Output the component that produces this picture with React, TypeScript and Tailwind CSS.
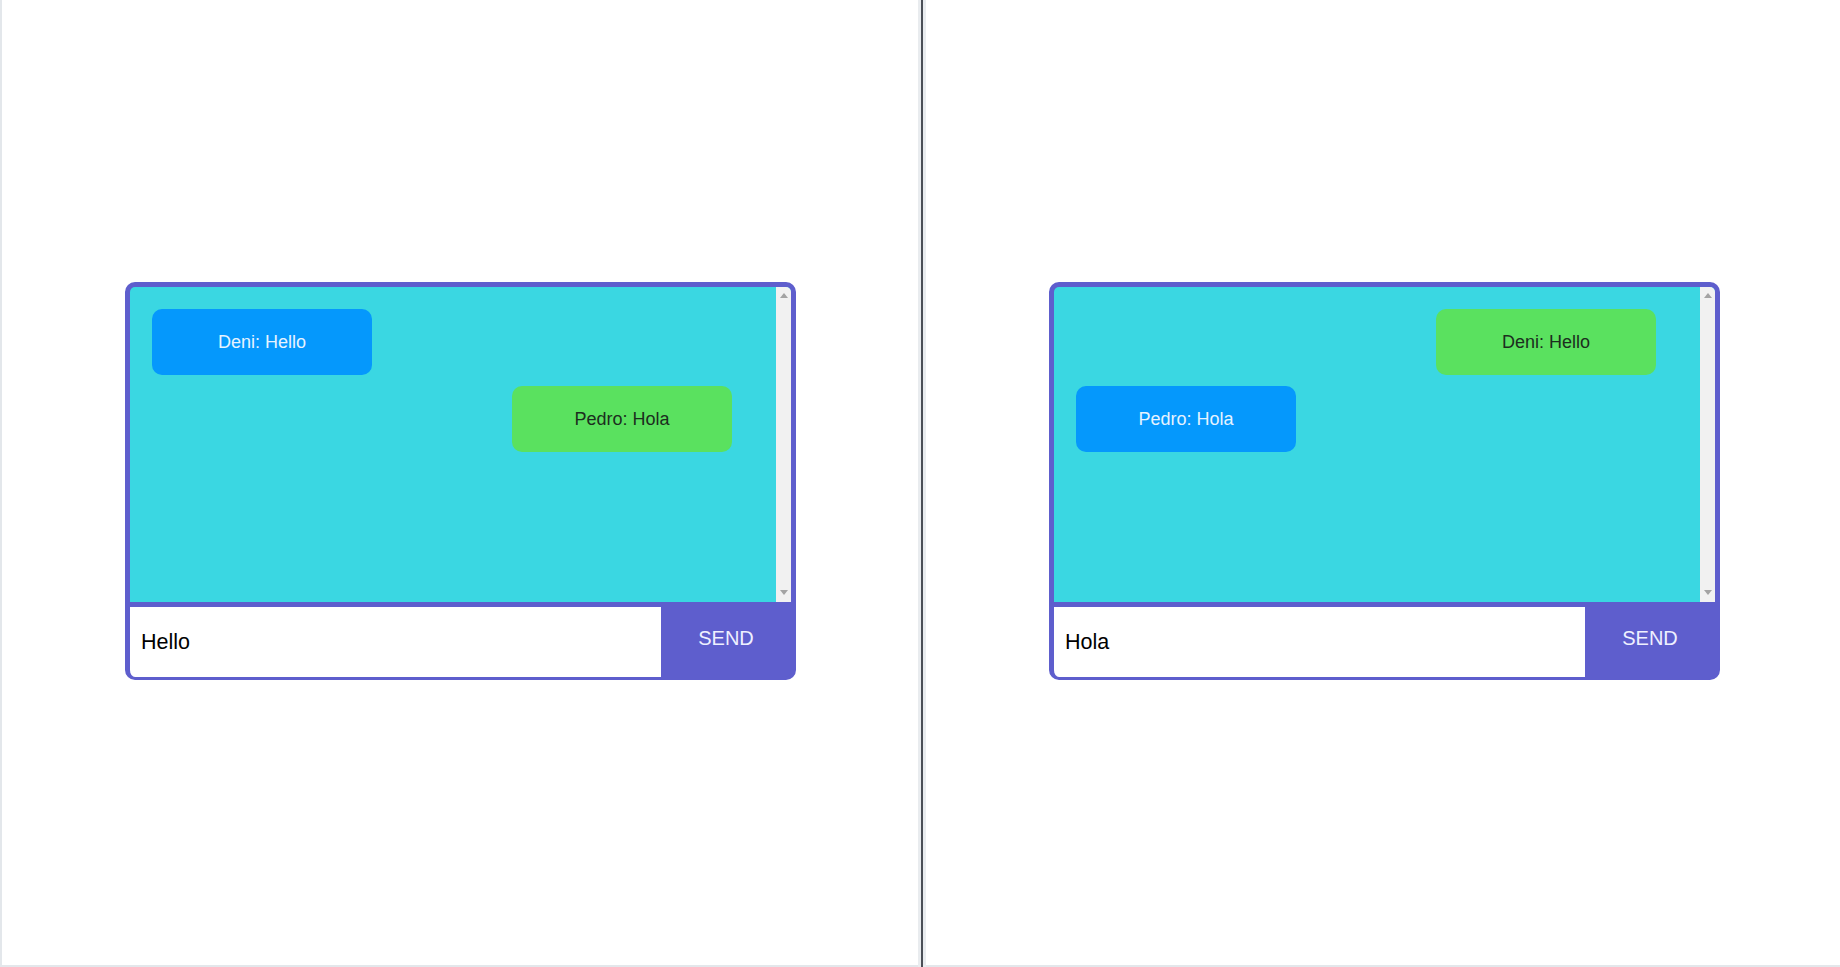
import React from "react";

type Msg = { name: string; text: string; mine: boolean };

function FakeScrollbar() {
  return (
    <div className="w-[15px] h-full shrink-0 bg-[#f1f1f1] flex flex-col items-center justify-between pt-[6px] pb-[7px]">
      <svg width="8" height="5" viewBox="0 0 8 5">
        <polygon points="4,0 8,5 0,5" fill="#a3a3a3" />
      </svg>
      <svg width="8" height="5" viewBox="0 0 8 5">
        <polygon points="0,0 8,0 4,5" fill="#a3a3a3" />
      </svg>
    </div>
  );
}

function ChatBox({ messages, draft }: { messages: Msg[]; draft: string }) {
  return (
    <div className="w-[671px] rounded-[10px] border-[5px] border-b-[3px] border-[#5e5ecd] bg-[#5e5ecd] overflow-hidden flex flex-col">
      <div className="h-[315px] bg-[#3ad7e2] flex">
        <div className="flex-1 h-full pt-[22px] pl-[22px] pr-[44px] flex flex-col gap-[11px]">
          {messages.map((m, i) => (
            <div
              key={i}
              className={
                m.mine
                  ? "w-[220px] h-[66px] shrink-0 rounded-[10px] bg-[#0598fc] text-[#e6f3ff] flex items-center justify-center text-[18px] self-start"
                  : "w-[220px] h-[66px] shrink-0 rounded-[10px] bg-[#5ae15f] text-[#1c2e1e] flex items-center justify-center text-[18px] self-end"
              }
            >
              {m.name}: {m.text}
            </div>
          ))}
        </div>
        <FakeScrollbar />
      </div>
      <div className="mt-[5px] flex h-[70px]">
        <input
          readOnly
          value={draft}
          className="flex-1 min-w-0 h-full bg-white pl-[11px] text-[21.5px] text-black outline-none"
          style={{ fontFamily: '"Liberation Sans", Arial, sans-serif' }}
        />
        <button
          className="w-[130px] h-full bg-[#5e5ecd] text-[#eef0ff] text-[20px] pb-[8px]"
          style={{ fontFamily: '"Liberation Sans", Arial, sans-serif' }}
        >
          SEND
        </button>
      </div>
    </div>
  );
}

export default function App() {
  return (
    <div
      className="flex w-[1840px] h-[967px] bg-white overflow-hidden"
      style={{ fontFamily: '"Liberation Sans", Arial, sans-serif' }}
    >
      <div className="w-[918px] h-full border-l-2 border-b-2 border-[#e3e7eb] pl-[123px] pt-[282px]">
        <ChatBox
          draft="Hello"
          messages={[
            { name: "Deni", text: "Hello", mine: true },
            { name: "Pedro", text: "Hola", mine: false },
          ]}
        />
      </div>
      <div className="w-[8px] h-full bg-[#e9ecef] flex justify-center">
        <div className="w-[2px] h-full bg-[#4b4f57]" />
      </div>
      <div className="flex-1 h-full border-b-2 border-[#e3e7eb] pl-[123px] pt-[282px]">
        <ChatBox
          draft="Hola"
          messages={[
            { name: "Deni", text: "Hello", mine: false },
            { name: "Pedro", text: "Hola", mine: true },
          ]}
        />
      </div>
    </div>
  );
}
